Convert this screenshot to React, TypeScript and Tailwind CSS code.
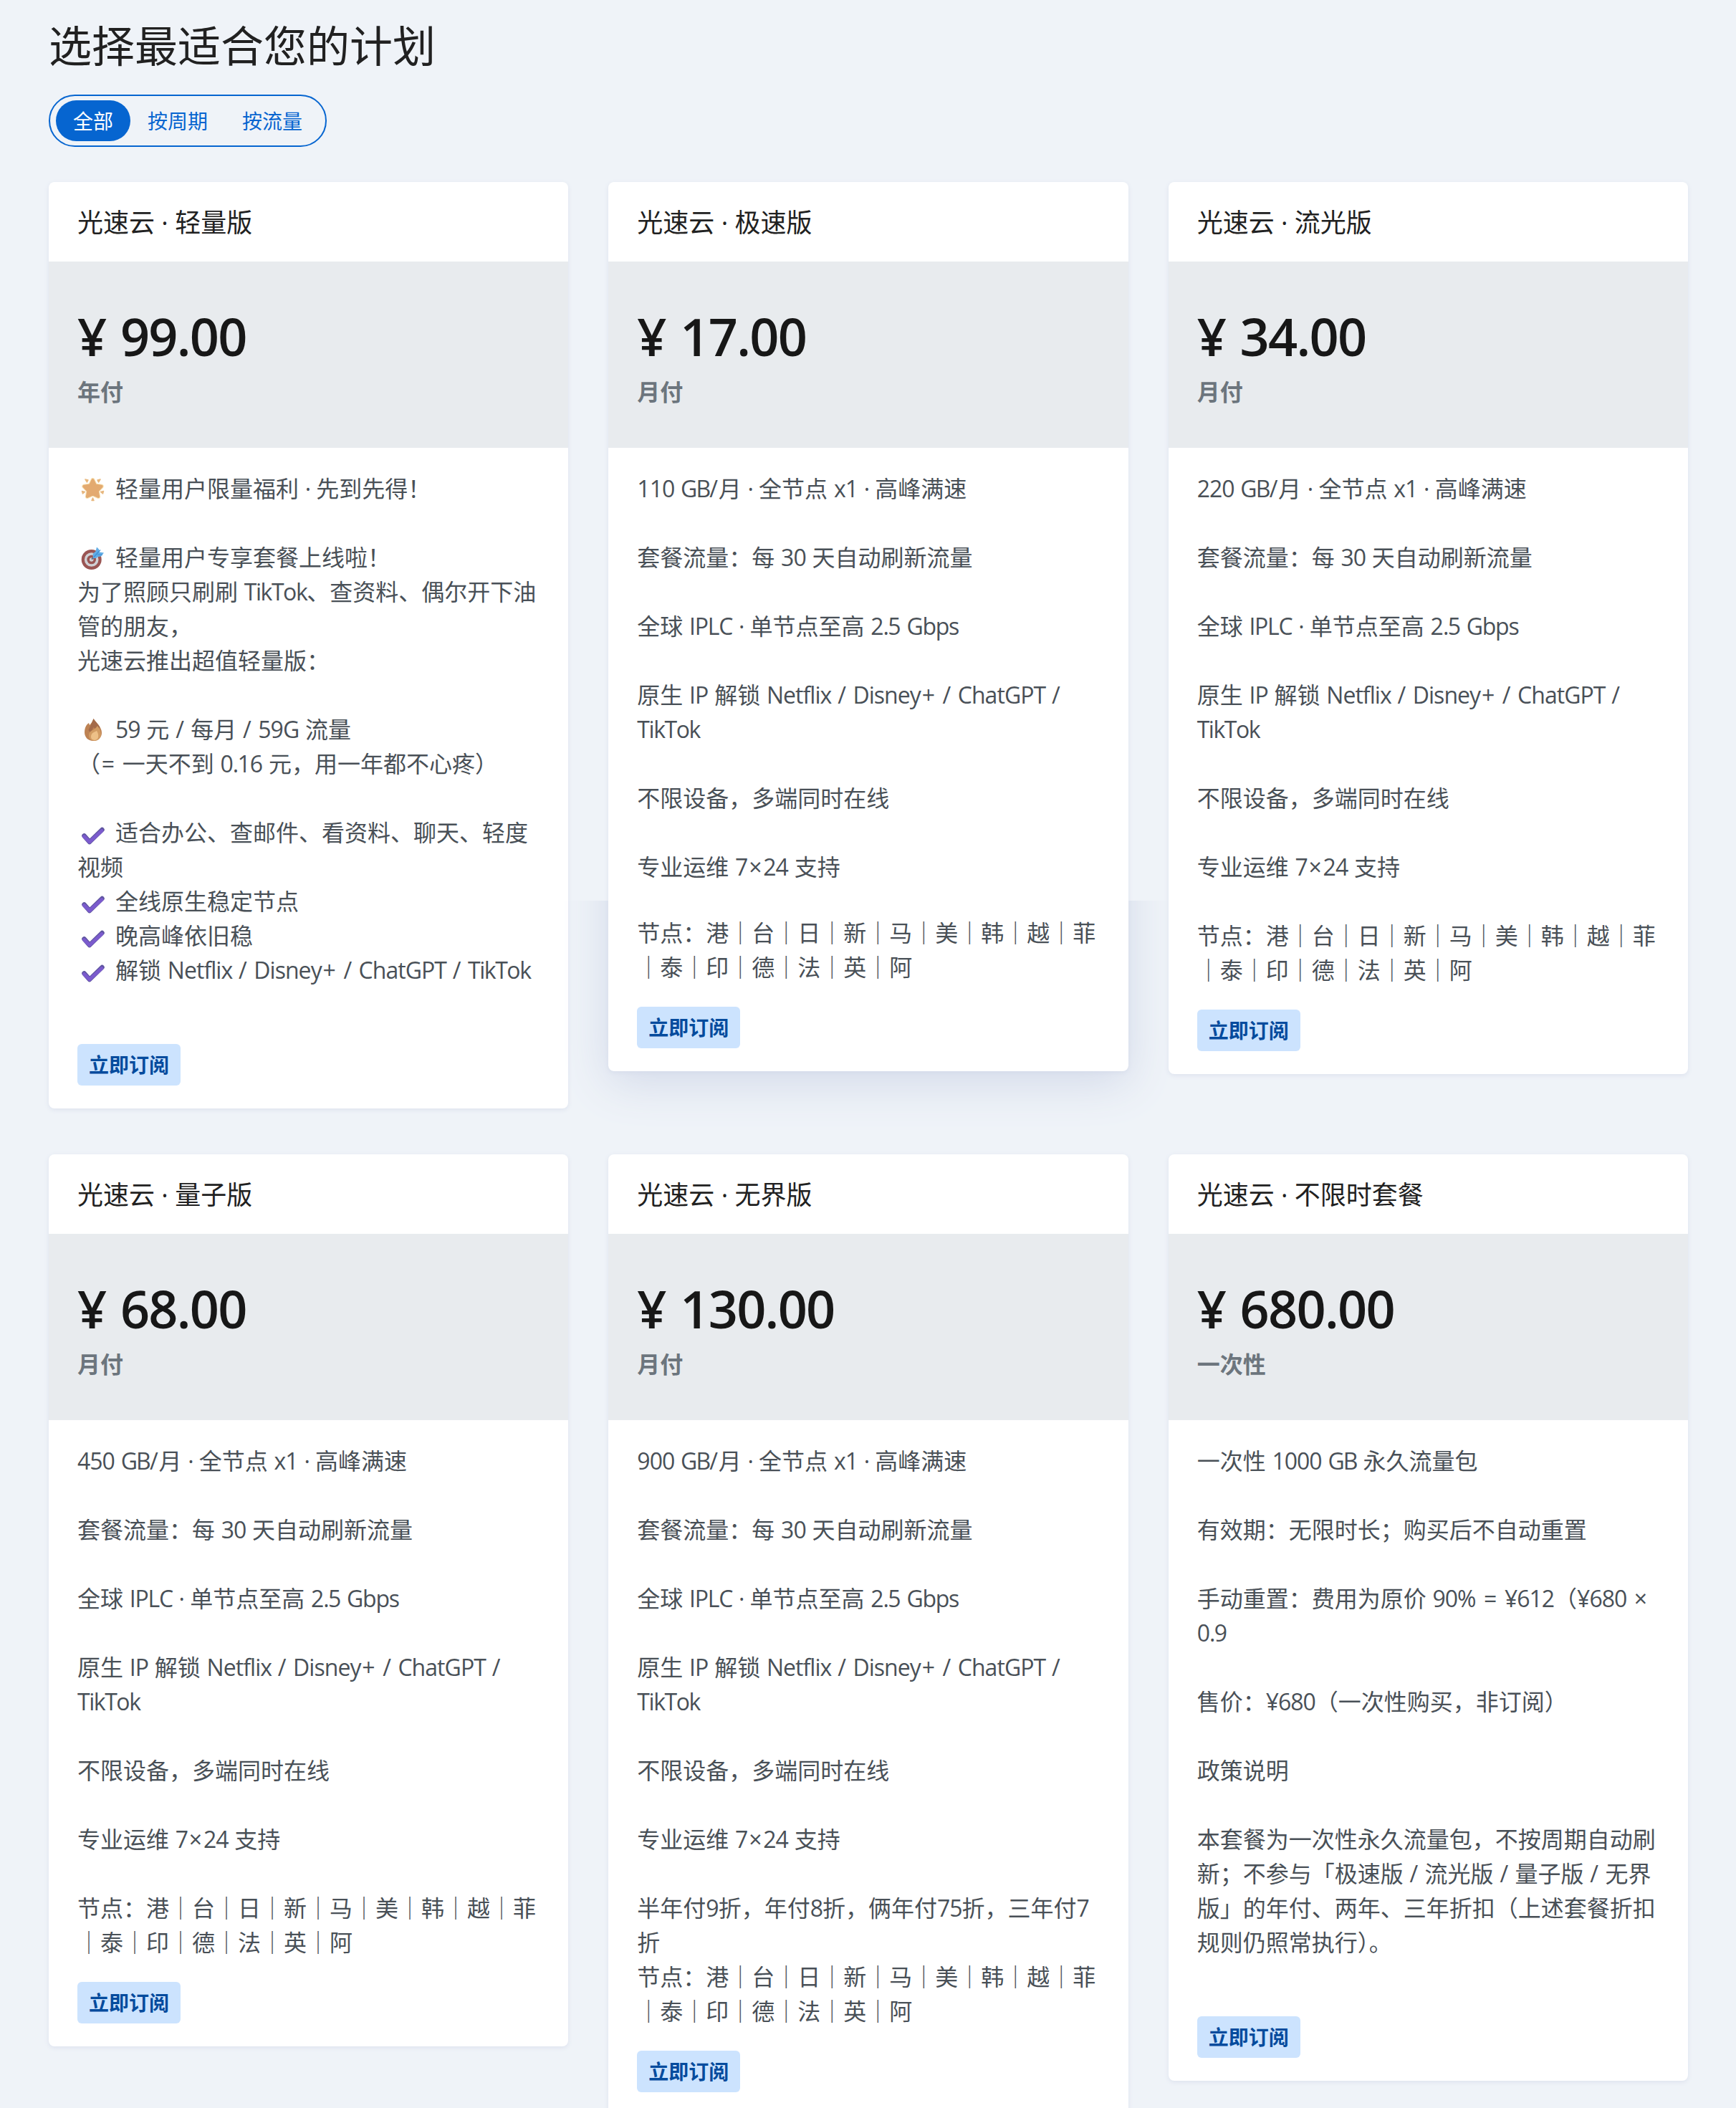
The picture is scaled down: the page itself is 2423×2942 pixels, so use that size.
import React from 'react';

interface Plan {
  name: string;
  price: string;
  period: string;
  lines: string[];
  raised?: boolean;
}

const tabs = ['全部', '按周期', '按流量'];

const common = [
  '',
  '套餐流量：每 30 天自动刷新流量',
  '',
  '全球 IPLC · 单节点至高 2.5 Gbps',
  '',
  '原生 IP 解锁 Netflix / Disney+ / ChatGPT /',
  'TikTok',
  '',
  '不限设备，多端同时在线',
  '',
  '专业运维 7×24 支持',
  '',
];

const nodes = ['节点：港｜台｜日｜新｜马｜美｜韩｜越｜菲', '｜泰｜印｜德｜法｜英｜阿'];

const plans: Plan[] = [
  {
    name: '光速云 · 轻量版',
    price: '99.00',
    period: '年付',
    lines: [
      ':star:轻量用户限量福利 · 先到先得！',
      '',
      ':target:轻量用户专享套餐上线啦！',
      '为了照顾只刷刷 TikTok、查资料、偶尔开下油',
      '管的朋友，',
      '光速云推出超值轻量版：',
      '',
      ':fire:59 元 / 每月 / 59G 流量',
      '（= 一天不到 0.16 元，用一年都不心疼）',
      '',
      ':check:适合办公、查邮件、看资料、聊天、轻度',
      '视频',
      ':check:全线原生稳定节点',
      ':check:晚高峰依旧稳',
      ':check:解锁 Netflix / Disney+ / ChatGPT / TikTok',
      '',
    ],
  },
  {
    name: '光速云 · 极速版',
    price: '17.00',
    period: '月付',
    lines: ['110 GB/月 · 全节点 x1 · 高峰满速', ...common, ...nodes],
    raised: true,
  },
  {
    name: '光速云 · 流光版',
    price: '34.00',
    period: '月付',
    lines: ['220 GB/月 · 全节点 x1 · 高峰满速', ...common, ...nodes],
  },
  {
    name: '光速云 · 量子版',
    price: '68.00',
    period: '月付',
    lines: ['450 GB/月 · 全节点 x1 · 高峰满速', ...common, ...nodes],
  },
  {
    name: '光速云 · 无界版',
    price: '130.00',
    period: '月付',
    lines: [
      '900 GB/月 · 全节点 x1 · 高峰满速',
      ...common,
      '半年付9折，年付8折，俩年付75折，三年付7',
      '折',
      ...nodes,
    ],
  },
  {
    name: '光速云 · 不限时套餐',
    price: '680.00',
    period: '一次性',
    lines: [
      '一次性 1000 GB 永久流量包',
      '',
      '有效期：无限时长；购买后不自动重置',
      '',
      '手动重置：费用为原价 90% = ¥612（¥680 ×',
      '0.9',
      '',
      '售价：¥680（一次性购买，非订阅）',
      '',
      '政策说明',
      '',
      '本套餐为一次性永久流量包，不按周期自动刷',
      '新；不参与「极速版 / 流光版 / 量子版 / 无界',
      '版」的年付、两年、三年折扣（上述套餐折扣',
      '规则仍照常执行）。',
      '',
    ],
  },
];

const Emoji: React.FC<{ name: string }> = ({ name }) => (
  <svg viewBox="0 0 60 60" className="-ml-2 mr-[1px] inline-block h-[60px] w-[60px] shrink-0">
    {name === 'star' && (
      <g strokeLinejoin="round">
        <path
          d="M29.500 18l3.600 7.500 8.600 1.300-6 6.200 1.500 8-7.700-3.500-7.700 3.500 1.500-8-6-6.200 8.600-1.300z"
          fill="#e3aa70"
          stroke="#f8e3b5"
          strokeWidth="6"
        />
        <path
          d="M29.500 18l3.600 7.500 8.600 1.300-6 6.200 1.500 8-7.700-3.500-7.700 3.500 1.500-8-6-6.200 8.600-1.300z"
          fill="#e3aa70"
          stroke="#e3aa70"
          strokeWidth="4"
        />
        <path
          d="M19 17l4 1-1.500 3zM40 17l-4 1 1.500 3zM14.500 33.500l4 1-3 2.500zM44.500 33.500l-4 1 3 2.500zM29.500 43l1.500 3.500h-3z"
          fill="#e3aa70"
          stroke="#e8b980"
          strokeWidth="1.500"
        />
      </g>
    )}
    {name === 'target' && (
      <g>
        <circle cx="27.700" cy="33" r="14" fill="#9a5553" />
        <circle cx="27.700" cy="33" r="9.800" fill="#d0d0d4" />
        <circle cx="27.700" cy="33" r="6.300" fill="#9a5553" />
        <circle cx="27.700" cy="33" r="2.800" fill="#d0d0d4" />
        <path d="M28 32.500l4-4" stroke="#5b6f8c" strokeWidth="2" />
        <path d="M30 31l-.5-6 4-3.500 1.500-6 3 3 .5 4 6.500 1-4 5-4 .5-3 2z" fill="#62ade6" />
        <path d="M31 29.500l9-10M36 26l7 .5" stroke="#3d8fd4" strokeWidth="1.200" />
      </g>
    )}
    {name === 'fire' && (
      <g>
        <path
          d="M30.500 15c3 5 11.500 11 11.500 20 0 6-5 11-12 11s-12-5-12-12c0-5 1.500-10 6-13l1 3c2-2 4.500-5 5.500-9z"
          fill="#bd8253"
        />
        <path d="M30.500 15c2.500 4 7 8 9 12l-4 4-5-4-4 8-3-4z" fill="#a36a4a" />
        <path d="M36 25c3 4 5 8 5 12 0 5-4 9-9 9s-8-3-8-8c0-7 8-6 12-13z" fill="#d19b63" />
        <path d="M35 32c3 4 4 13-3 13s-6-9-1-11z" fill="#edc088" />
      </g>
    )}
    {name === 'check' && (
      <g fill="none" strokeLinecap="round" strokeLinejoin="round">
        <path d="M17.500 34.500l7.500 8.500L42.500 26" stroke="#5f55a0" strokeWidth="6.500" />
        <path d="M17.500 35.500l7.500 7.500L42 27.500" stroke="#7b5bcd" strokeWidth="4.800" />
      </g>
    )}
  </svg>
);

// Latin glyphs run a little tight next to the CJK text
const trackingOf = (token: string) => {
  if (token === 'TikTok') return 'tracking-[-1.45px]';
  if (token === 'GB') return 'tracking-[-1.8px]';
  if (token === 'IPLC' || token === 'Gbps') return 'tracking-[-1.25px]';
  if (/^[A-Za-z]/.test(token)) return 'tracking-[-0.95px]';
  if (/^[¥\d]/.test(token)) return 'tracking-[-1px]';
  if (/^[.·]/.test(token)) return 'tracking-[-1.6px]';
  if (token === '/') return 'tracking-[0.7px]';
  return 'px-[1.8px]';
};

const Line: React.FC<{ text: string; short?: boolean }> = ({ text, short }) => {
  const match = text.match(/^:(\w+):(.*)$/);
  const tokens = (match ? match[2] : text).split(/([A-Za-z]+|[¥\d]+|[.·]|\/|[+=×])/);
  return (
    <p
      className={`flex items-center leading-[48px] whitespace-pre [word-spacing:0.45px] ${short ? 'h-11' : 'h-12'}`}
    >
      {match && <Emoji name={match[1]} />}
      <span>
        {tokens.map((token, i) =>
          i % 2 ? (
            <span key={i} className={trackingOf(token)}>
              {token}
            </span>
          ) : (
            token
          )
        )}
      </span>
    </p>
  );
};

const PlanCard: React.FC<{ plan: Plan }> = ({ plan }) => (
  <div className="relative rounded-lg bg-white shadow-[0_2px_6px_#dde2ee]">
    {plan.raised && (
      <div className="absolute inset-0 rounded-lg shadow-[0_16px_64px_#d2d9e9] [clip-path:inset(1003px_-100px_-100px_-100px)]" />
    )}
    <h3 className="flex h-[111px] items-center px-10 pt-0.5 text-[36px] text-[#212121]">{plan.name}</h3>
    <div className="h-[260px] bg-[#e8ebee] px-10 pt-[66px]">
      <div className="h-[76px] text-[72px] leading-[76px] font-semibold text-[#171717]">
        ¥ <span className="tracking-[-1.7px]">{plan.price}</span>
      </div>
      <div className="mt-4 text-[32px] leading-[48px] font-bold text-[#6c757d]">{plan.period}</div>
    </div>
    <div className="px-10 pt-[33px] pb-8 text-[32px] text-[#495057]">
      {plan.lines.map((line, i) => (
        <Line key={i} text={line} short={plan.raised && i === 12} />
      ))}
      <button className="mt-[31px] block h-[58px] w-36 rounded-md bg-[#cce3fe] text-[28px] font-bold text-[#054b9d]">
        立即订阅
      </button>
    </div>
  </div>
);

const App: React.FC = () => (
  <main
    lang="zh-CN"
    className="h-[2942px] overflow-hidden bg-[#eff3f8] pr-[67px] pl-[68px] font-['Open_Sans','Noto_Sans_CJK_SC',sans-serif]"
  >
    <h1 className="pt-6 text-[60px] leading-[80px] text-[#212121]">选择最适合您的计划</h1>
    <div className="mt-7 flex h-[73px] w-[388px] items-center rounded-full border-2 border-[#0665d0] px-2 text-[28px]">
      {tabs.map((tab, i) => (
        <button
          key={tab}
          className={
            i === 0
              ? 'h-[57px] w-[104px] rounded-full bg-[#0665d0] text-white'
              : 'h-[57px] w-[132px] text-[#0665d0]'
          }
        >
          {tab}
        </button>
      ))}
    </div>
    <div className="mt-[49px] grid grid-cols-3 items-start gap-x-14 gap-y-16">
      {plans.map((plan) => (
        <PlanCard key={plan.name} plan={plan} />
      ))}
    </div>
  </main>
);

export default App;
